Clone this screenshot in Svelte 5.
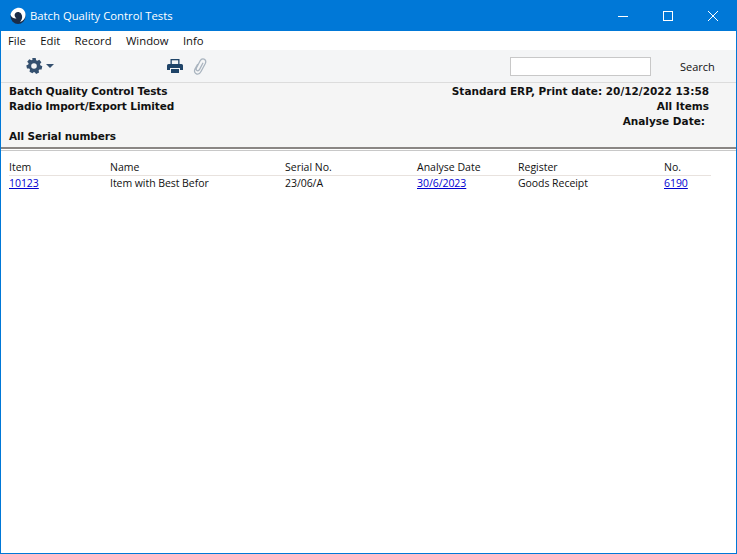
<script>
  const columns = [
    { label: "Item", value: "10123", link: true, width: 101 },
    { label: "Name", value: "Item with Best Befor", width: 175 },
    { label: "Serial No.", value: "23/06/A", width: 132 },
    { label: "Analyse Date", value: "30/6/2023", link: true, width: 101 },
    { label: "Register", value: "Goods Receipt", width: 146 },
    { label: "No.", value: "6190", link: true, width: 47 }
  ];
  const menus = ["File", "Edit", "Record", "Window", "Info"];
</script>

<div class="window">
  <header class="titlebar">
    <svg class="logo" width="18" height="18" viewBox="0 0 18 18">
      <circle cx="9" cy="9.500" r="7.500" fill="#1a2c48" />
      <path d="M1.500 7.500 C3 2 9 -.5 13 1.500 C16.500 3.500 17.500 8 15.500 11.500 C14.500 13.500 12.500 14.500 11 14.800 C13.500 12.500 13.800 9 12 6.500 C10.500 4.700 8 4.500 6.500 6 C5 7.500 5.500 10 7.500 11.500 C5 11.800 2 10.500 1.500 7.500Z" fill="#fff" />
    </svg>
    <span class="title">Batch Quality Control Tests</span>
    <div class="controls">
      <svg width="12" height="12" viewBox="0 0 12 12"><path d="M1 6.500H11" stroke="#fff" fill="none" /></svg>
      <svg width="12" height="12" viewBox="0 0 12 12"><rect x="1.500" y="1.500" width="9" height="9" stroke="#fff" fill="none" /></svg>
      <svg width="12" height="12" viewBox="0 0 12 12"><path d="M1 1L11 11M11 1L1 11" stroke="#fff" fill="none" /></svg>
    </div>
  </header>

  <nav class="menubar">
    {#each menus as menu}
      <span>{menu}</span>
    {/each}
  </nav>

  <div class="toolbar">
    <div class="gear">
      <svg width="18" height="18" viewBox="0 0 18 18">
        <path fill="#34506f" fill-rule="evenodd" d="M7.300 1h3.400l.4 2.200 1.200.6 2-1 2.100 2.500-1.400 1.700.3 1.300 2 .9-.7 3.200-2.200 0-.8 1 .5 2.200-3 1.400-1.300-1.800h-1.400L7.500 16.200l-3-1.400.5-2.200-.8-1-2.200 0-.7-3.200 2-.9.3-1.300L2.200 4.800 4.300 2.300l2 1 1.200-.6ZM9 6.200a2.800 2.800 0 1 0 0 5.600 2.800 2.800 0 0 0 0-5.600Z" />
      </svg>
      <svg width="8" height="4" viewBox="0 0 8 4"><path d="M0 0H8L4 4Z" fill="#34506f" /></svg>
    </div>
    <div class="actions">
      <svg width="16" height="14" viewBox="0 0 16 14">
        <path fill="#1f4468" fill-rule="evenodd" d="M3.500 0H12.500V5H3.500ZM1.500 5H14.500A1.500 1.500 0 0 1 16 6.500V11H13V9H3V11H0V6.500A1.500 1.500 0 0 1 1.500 5ZM4 10H12V14H4Z" />
        <path fill="#f4f5f6" d="M4.800 1.300H11.200V5H4.800Z" />
      </svg>
      <svg width="14" height="17" viewBox="0 0 14 17">
        <path fill="none" stroke="#a9b4bf" stroke-width="1.300" stroke-linecap="round" d="M4.500 6.500L2 11C.8 13.500 2 15.500 3.800 16C5.500 16.400 7 15.500 8 13.500L12.300 5.500C13.300 3.500 12.500 1.700 11 1.100C9.500 .6 8 1.200 7 3L3.400 10C2.800 11.300 3.400 12.400 4.300 12.700C5.200 13 6 12.500 6.600 11.400L9.800 5.300" />
      </svg>
    </div>
    <input class="search" type="text" />
    <span class="search-label">Search</span>
  </div>

  <section class="report-head">
    <div class="left">
      <div>Batch Quality Control Tests</div>
      <div>Radio Import/Export Limited</div>
      <div>&nbsp;</div>
      <div>All Serial numbers</div>
    </div>
    <div class="right">
      <div>Standard ERP, Print date: 20/12/2022 13:58</div>
      <div>All Items</div>
      <div class="analyse">Analyse Date:</div>
    </div>
  </section>

  <main class="report">
    <div class="row head">
      {#each columns as col}
        <span style="width: {col.width}px">{col.label}</span>
      {/each}
    </div>
    <div class="row values">
      {#each columns as col}
        <span style="width: {col.width}px" class:link={col.link}>{col.value}</span>
      {/each}
    </div>
  </main>
</div>

<style>
  :global(body) {
    margin: 0;
  }

  .window {
    box-sizing: border-box;
    width: 737px;
    height: 554px;
    display: flex;
    flex-direction: column;
    background: #fff;
    border: 1px solid #0078d7;
    border-top: none;
    font-family: "Open Sans", "Noto Sans", sans-serif;
    font-size: 10.500px;
    color: #111;
    overflow: hidden;
  }

  .titlebar {
    height: 31px;
    flex: none;
    display: flex;
    align-items: center;
    background: #0078d7;
    color: #fff;
    padding-left: 8px;
  }

  .logo {
    margin-right: 3px;
  }

  .title {
    font-size: 11.300px;
  }

  .controls {
    margin-left: auto;
    display: flex;
    gap: 33px;
    padding-right: 17px;
  }

  .menubar {
    height: 19px;
    flex: none;
    display: flex;
    align-items: center;
    gap: 14.300px;
    padding-left: 7px;
    font-size: 11.300px;
  }

  .toolbar {
    height: 33px;
    flex: none;
    display: flex;
    align-items: center;
    background: #f4f5f6;
    border-bottom: 1px solid #dcdcdc;
    box-sizing: border-box;
  }

  .gear {
    display: flex;
    align-items: center;
    gap: 3px;
    margin-left: 24px;
  }

  .actions {
    display: flex;
    align-items: center;
    gap: 10px;
    margin-left: 113px;
  }

  .search {
    box-sizing: border-box;
    width: 141px;
    height: 19px;
    margin: 0 0 0 303px;
    padding: 0;
    border: 1px solid #c8c8c8;
    background: #fff;
  }

  .search-label {
    margin-left: 29px;
    font-size: 11px;
  }

  .report-head {
    height: 66px;
    flex: none;
    box-sizing: border-box;
    display: flex;
    justify-content: space-between;
    padding: 1px 27px 0 8px;
    background: #f5f5f5;
    border-bottom: 2px solid #8a8684;
    font-family: "DejaVu Sans", sans-serif;
    font-size: 10.500px;
    font-weight: 700;
    line-height: 15px;
  }

  .left {
    letter-spacing: -0.100px;
  }

  .right {
    text-align: right;
  }

  .analyse {
    padding-right: 4px;
  }

  .report {
    flex: 1;
    margin-top: 1px;
    border-top: 1px solid #c8c8c8;
    padding: 8px 0 0 8px;
  }

  .row {
    display: flex;
    width: 702px;
    height: 16px;
    line-height: 15px;
  }

  .row span {
    flex: none;
  }

  .values {
    letter-spacing: -0.050px;
  }

  .head {
    line-height: 17px;
    border-bottom: 1px solid #e8e2de;
  }

  .link {
    color: #0000d0;
    text-decoration: underline;
  }
</style>
